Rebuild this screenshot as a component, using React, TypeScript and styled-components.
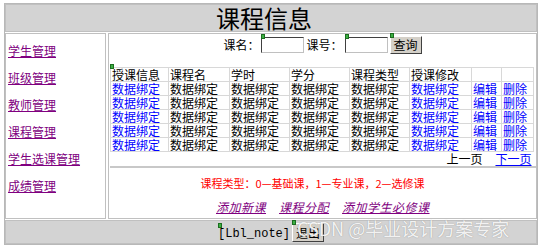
import React from 'react'
import styled, { createGlobalStyle } from 'styled-components'

const GlobalStyle = createGlobalStyle`
    body {
        margin: 0;
        background: #fff;
        font-family: "Noto Sans CJK SC", "Liberation Sans", sans-serif;
        font-size: 12px;
        color: #000;
    }
`;

const Frame = styled.div`
    position: relative;
    width: 532px;
    margin: 3px 0 0 4px;
    border: 1px solid #b8b8b8;
    display: flex;
    flex-direction: column;
    gap: 1px;
    background: #fff;
`;

const Header = styled.div`
    height: 26px;
    background: #d3d3d3;
    border: 1px solid #c0c0c0;
    display: flex;
    align-items: center;
    justify-content: center;
    padding-right: 14px;
    font-size: 24px;
    line-height: 26px;
    font-family: "Noto Sans CJK SC", serif;
`;

const Middle = styled.div`
    display: grid;
    grid-template-columns: 101px 1fr;
    gap: 2px;
    height: 186px;
`;

const Menu = styled.div`
    border: 1px solid #c0c0c0;
    display: flex;
    flex-direction: column;
    gap: 9px;
    padding: 8px 0 0 2px;
`;

const MenuLink = styled.a`
    color: #800080;
    text-decoration: underline;
    font-size: 12px;
    line-height: 18px;
    cursor: pointer;
`;

const Content = styled.div`
    border: 1px solid #c0c0c0;
    display: flex;
    flex-direction: column;
`;

const SearchBar = styled.div`
    display: flex;
    align-items: center;
    justify-content: center;
    height: 19px;
    padding-top: 1px;
    gap: 2px;
`;

const Label = styled.span`
    font-size: 12px;
`;

const Marked = styled.span`
    position: relative;
    display: inline-flex;
`;

const Marker = styled.span`
    position: absolute;
    left: 0;
    top: -3px;
    width: 4px;
    height: 5px;
    background: #3cb043;
    border: 1px solid #1c6e20;
    box-sizing: border-box;
`;

const Input = styled.input`
    width: 43px;
    height: 16px;
    box-sizing: border-box;
    border: 1px solid #404040;
    border-right-color: #c0c0c0;
    border-bottom-color: #c0c0c0;
    background: #fff;
    padding: 0;
`;

const Button = styled.button`
    height: 18px;
    padding: 0 3px;
    font-size: 12px;
    font-family: "Noto Sans CJK SC", sans-serif;
    line-height: 14px;
    background: #d4d0c8;
    border: 1px solid;
    border-color: #fff #404040 #404040 #fff;
    color: #000;
`;

const TableWrap = styled.div`
    position: relative;
    margin: 13px 0 0 1px;
    border-bottom: 2px solid #c8c8c8;
    padding-bottom: 1px;
`;

const Grid = styled.table`
    border-collapse: collapse;
    width: 423px;
    table-layout: fixed;
    font-size: 12px;
`;

const Cell = styled.td<{ $w?: number }>`
    border: 1px solid #d8d8d8;
    padding: 0 0 0 1px;
    height: 13px;
    line-height: 13px;
    white-space: nowrap;
    overflow: hidden;
    ${p => (p.$w ? `width: ${p.$w}px;` : '')}
`;

const Pager = styled.td`
    text-align: right;
    padding: 0 2px 0 0;
    height: 13px;
    line-height: 13px;
`;

const Link = styled.a`
    color: #0000ff;
    text-decoration: underline;
    cursor: pointer;
`;

const PagerLink = styled(Link)`
    margin-left: 13px;
`;

const Note = styled.div`
    color: #ff0000;
    font-size: 11px;
    text-align: center;
    margin: 8px 20px 0 0;
    line-height: 14px;
`;

const Actions = styled.div`
    display: flex;
    justify-content: flex-start;
    gap: 13px;
    margin: 10px 0 0 107px;
`;

const ActionLink = styled.a`
    color: #800080;
    font-style: italic;
    text-decoration: underline;
    font-size: 12px;
    line-height: 14px;
    letter-spacing: 0.5px;
    cursor: pointer;
`;

const Footer = styled.div`
    height: 22px;
    background: #d3d3d3;
    border: 1px solid #c0c0c0;
    display: flex;
    align-items: flex-end;
    justify-content: center;
    gap: 2px;
`;

const Mono = styled.span`
    font-family: "Liberation Mono", monospace;
    font-size: 12px;
    line-height: 16px;
    margin-bottom: 1px;
`;

const ExitButton = styled(Button)`
    height: 19px;
    margin-bottom: 1px;
`;

const Watermark = styled.div`
    position: absolute;
    left: 292px;
    top: 213px;
    font-size: 18px;
    line-height: 22px;
    color: rgba(255, 255, 255, 0.9);
    text-shadow: 0 0 1px rgba(110, 110, 110, 0.7);
    pointer-events: none;
    white-space: nowrap;
`;

const headers = ['授课信息', '课程名', '学时', '学分', '课程类型', '授课修改', '', ''];
const widths = [56, 59, 58, 58, 58, 60, 28, 30];
const rows = [1, 2, 3, 4, 5];
const menu = ['学生管理', '班级管理', '教师管理', '课程管理', '学生选课管理', '成绩管理'];

export default function App() {
    return (
        <>
            <GlobalStyle />
            <Frame>
                <Header>课程信息</Header>
                <Middle>
                    <Menu>
                        {menu.map(m => <MenuLink key={m}>{m}</MenuLink>)}
                    </Menu>
                    <Content>
                        <SearchBar>
                            <Label>课名：</Label>
                            <Marked><Marker /><Input /></Marked>
                            <Label>课号：</Label>
                            <Marked><Marker /><Input /></Marked>
                            <Marked><Marker /><Button>查询</Button></Marked>
                        </SearchBar>
                        <TableWrap>
                            <Marker />
                            <Grid>
                                <tbody>
                                    <tr>
                                        {headers.map((h, i) => <Cell key={i} $w={widths[i]}>{h}</Cell>)}
                                    </tr>
                                    {rows.map(r => (
                                        <tr key={r}>
                                            <Cell><Link>数据绑定</Link></Cell>
                                            <Cell>数据绑定</Cell>
                                            <Cell>数据绑定</Cell>
                                            <Cell>数据绑定</Cell>
                                            <Cell>数据绑定</Cell>
                                            <Cell><Link>数据绑定</Link></Cell>
                                            <Cell><Link>编辑</Link></Cell>
                                            <Cell><Link>删除</Link></Cell>
                                        </tr>
                                    ))}
                                    <tr>
                                        <Pager colSpan={8}>上一页<PagerLink>下一页</PagerLink></Pager>
                                    </tr>
                                </tbody>
                            </Grid>
                        </TableWrap>
                        <Note>课程类型：0—基础课，1—专业课，2—选修课</Note>
                        <Actions>
                            <ActionLink>添加新课</ActionLink>
                            <ActionLink>课程分配</ActionLink>
                            <ActionLink>添加学生必修课</ActionLink>
                        </Actions>
                    </Content>
                </Middle>
                <Footer>
                    <Marked><Marker /><Mono>[Lbl_note]</Mono></Marked>
                    <Marked><Marker /><ExitButton>退出</ExitButton></Marked>
                </Footer>
                <Watermark>CSDN @毕业设计方案专家</Watermark>
            </Frame>
        </>
    )
}
